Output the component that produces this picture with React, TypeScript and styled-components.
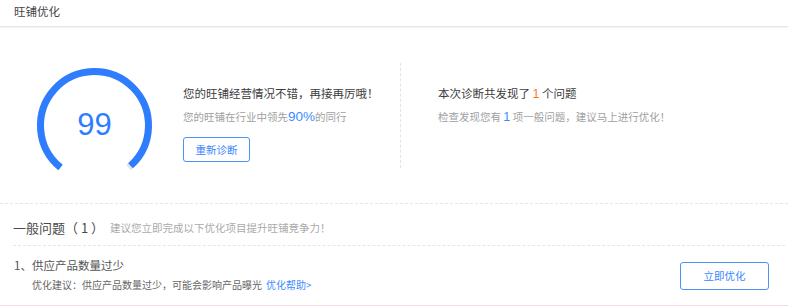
import styled, { createGlobalStyle } from 'styled-components'

const GlobalStyle = createGlobalStyle`
  html, body {
    margin: 0;
    padding: 0;
    background: #fff;
  }
  body {
    font-family: "Noto Sans CJK SC", "Noto Sans", sans-serif;
    color: #333;
  }
`

const Page = styled.div`
  width: 788px;
  background: #fff;
`

const Header = styled.div`
  height: 26px;
  line-height: 22px;
  padding-left: 14px;
  font-size: 11.5px;
  color: #444;
  border-bottom: 1px solid #e6e6e6;
  box-shadow: 0 1px 0 #f4f4f4;
`

const Summary = styled.div`
  display: flex;
  align-items: flex-start;
  height: 176px;
`

const GaugeBox = styled.div`
  position: relative;
  width: 123px;
  height: 123px;
  margin: 37px 0 0 33px;
`

const Score = styled.div`
  position: absolute;
  inset: 0;
  display: flex;
  align-items: center;
  justify-content: center;
  font-family: "Liberation Sans", "Noto Sans", sans-serif;
  font-size: 31px;
  color: #2f7dff;
  padding-bottom: 1px;
`

const Block = styled.div<{ $width?: number; $left: number }>`
  display: flex;
  flex-direction: column;
  align-items: flex-start;
  margin: 56px 0 0 ${p => p.$left}px;
  width: ${p => (p.$width ? `${p.$width}px` : 'auto')};
`

const Title = styled.div`
  font-size: 11.5px;
  line-height: 20px;
  color: #3c3c3c;
  white-space: nowrap;
`

const Sub = styled.div<{ $gap: number }>`
  margin-top: ${p => p.$gap}px;
  font-size: 10.5px;
  line-height: 20px;
  color: #a0a0a0;
  white-space: nowrap;
`

const Percent = styled.span`
  font-family: "Liberation Sans", "Noto Sans", sans-serif;
  font-size: 13.5px;
  color: #3d8bff;
`

const Num = styled.span<{ $color: string }>`
  color: ${p => p.$color};
  font-family: "Liberation Sans", "Noto Sans", sans-serif;
  font-size: 12.5px;
`

const OutlineBtn = styled.button<{ $w: number; $h: number }>`
  width: ${p => p.$w}px;
  height: ${p => p.$h}px;
  padding: 0;
  border: 1px solid #4b93f5;
  border-radius: 3px;
  background: #fff;
  color: #3a86ff;
  font-family: "Noto Sans CJK SC", "Noto Sans", sans-serif;
  font-size: 10.5px;
  cursor: pointer;
`

const ButtonRow = styled.div`
  margin-top: 8px;
`

const Divider = styled.div`
  margin: 36px 0 0 0;
  width: 0;
  height: 105px;
  border-left: 1px dashed #e3e3e3;
`

const IssueHead = styled.div`
  border-top: 1px dashed #e6e6e6;
  padding: 0 3px 0 13px;
`

const IssueHeadInner = styled.div`
  display: flex;
  align-items: center;
  padding-top: 5px;
  height: 36px;
  border-bottom: 1px dashed #e6e6e6;
  white-space: nowrap;
`

const IssueLabel = styled.span`
  font-size: 13px;
  color: #4a4a4a;
`

const IssueHint = styled.span`
  margin-left: 6px;
  font-size: 10.5px;
  color: #aaa;
`

const IssueItem = styled.div`
  display: flex;
  align-items: center;
  justify-content: space-between;
  border-bottom: 1px solid #fcd9dc;
  padding-right: 19px;
`

const ItemText = styled.div`
  padding: 9px 0 10px 14px;
`

const ItemTitle = styled.div`
  font-size: 11.5px;
  line-height: 20px;
  color: #555;
`

const ItemAdvice = styled.div`
  padding-left: 18px;
  font-size: 10px;
  line-height: 20px;
  color: #666;
  white-space: nowrap;
`

const HelpLink = styled.a`
  margin-left: 4px;
  color: #3d8bff;
  text-decoration: none;
`

function Gauge({ value }: { value: number }) {
  const cx = 61.5
  const cy = 61.5
  const r = 54
  const start = 129
  const sweep = 282
  const pt = (deg: number) => {
    const a = (deg * Math.PI) / 180
    return `${(cx + r * Math.cos(a)).toFixed(2)} ${(cy + r * Math.sin(a)).toFixed(2)}`
  }
  const arc = (from: number, to: number) =>
    `M ${pt(from)} A ${r} ${r} 0 ${to - from > 180 ? 1 : 0} 1 ${pt(to)}`
  const end = start + (sweep * value) / 100
  return (
    <GaugeBox>
      <svg width="123" height="123" viewBox="0 0 123 123">
        <path d={arc(start, start + sweep)} fill="none" stroke="#e4e4e4" strokeWidth="7" />
        <path d={arc(start, end)} fill="none" stroke="#2f7dff" strokeWidth="7" />
      </svg>
      <Score>{value}</Score>
    </GaugeBox>
  )
}

function App() {
  return (
    <Page>
      <GlobalStyle />
      <Header>旺铺优化</Header>
      <Summary>
        <Gauge value={99} />
        <Block $left={27} $width={217}>
          <Title>您的旺铺经营情况不错，再接再厉哦！</Title>
          <Sub $gap={4}>
            您的旺铺在行业中领先<Percent>90%</Percent>的同行
          </Sub>
          <ButtonRow>
            <OutlineBtn $w={67} $h={25}>重新诊断</OutlineBtn>
          </ButtonRow>
        </Block>
        <Divider />
        <Block $left={37}>
          <Title>
            本次诊断共发现了 <Num $color="#ff7a1a">1</Num> 个问题
          </Title>
          <Sub $gap={3}>
            检查发现您有 <Num $color="#3d8bff">1</Num> 项一般问题，建议马上进行优化！
          </Sub>
        </Block>
      </Summary>
      <IssueHead>
        <IssueHeadInner>
          <IssueLabel>一般问题（ 1 ）</IssueLabel>
          <IssueHint>建议您立即完成以下优化项目提升旺铺竞争力！</IssueHint>
        </IssueHeadInner>
      </IssueHead>
      <IssueItem>
        <ItemText>
          <ItemTitle>1、供应产品数量过少</ItemTitle>
          <ItemAdvice>
            优化建议：供应产品数量过少，可能会影响产品曝光
            <HelpLink href="#">优化帮助&gt;</HelpLink>
          </ItemAdvice>
        </ItemText>
        <OutlineBtn $w={89} $h={28}>立即优化</OutlineBtn>
      </IssueItem>
    </Page>
  )
}

export default App
